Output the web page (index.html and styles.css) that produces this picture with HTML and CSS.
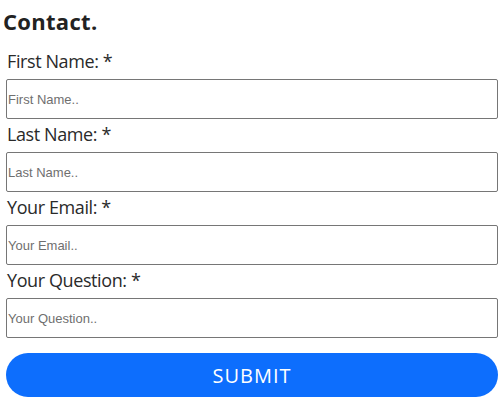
FILE: index.html
```html
<!DOCTYPE html>
<html lang="en">
<head>
<meta charset="utf-8">
<title>Contact</title>
<link rel="stylesheet" href="styles.css">
</head>
<body>
<main class="contact">
  <h1 class="contact-title">Contact.</h1>
  <form class="contact-form">
    <div class="field">
      <label class="field-label" for="fn">First Name: *</label>
      <input class="field-input" id="fn" type="text" placeholder="First Name..">
    </div>
    <div class="field">
      <label class="field-label" for="ln">Last Name: *</label>
      <input class="field-input" id="ln" type="text" placeholder="Last Name..">
    </div>
    <div class="field">
      <label class="field-label" for="em">Your Email: *</label>
      <input class="field-input" id="em" type="text" placeholder="Your Email..">
    </div>
    <div class="field">
      <label class="field-label" for="qu">Your Question: *</label>
      <input class="field-input" id="qu" type="text" placeholder="Your Question..">
    </div>
    <button class="submit" type="button">SUBMIT</button>
  </form>
</main>
</body>
</html>
```

FILE: styles.css
```css
html, body {
  margin: 0;
  padding: 0;
  background: #ffffff;
}

.contact {
  padding: 7px 6px 0 6px;
  font-family: "Open Sans", "Liberation Sans", sans-serif;
  color: #222222;
}

.contact-title {
  margin: 0 0 11px -3px;
  font-size: 22px;
  line-height: 28px;
  font-weight: 700;
  letter-spacing: 0.3px;
  color: #222222;
}

.contact-form {
  display: flex;
  flex-direction: column;
}

.field {
  display: flex;
  flex-direction: column;
}

.field-label {
  margin: 2px 0 5px 1px;
  font-size: 18px;
  line-height: 26px;
  font-weight: 400;
  letter-spacing: -0.4px;
  color: #2a2a2a;
}

.field-input {
  box-sizing: border-box;
  width: 492px;
  height: 40px;
  margin: 0;
  padding: 0 0 0 1px;
  border: 1px solid #767676;
  border-radius: 2px;
  font-family: "Liberation Sans", Arial, sans-serif;
  font-size: 13px;
  color: #222222;
  background: #ffffff;
}

.field-input::placeholder {
  color: #6f6f6f;
}

.submit {
  box-sizing: border-box;
  width: 492px;
  height: 44px;
  margin-top: 15px;
  border: none;
  border-radius: 22px;
  background: #0d6efd;
  color: #ffffff;
  font-family: "Open Sans", "Liberation Sans", sans-serif;
  font-size: 20px;
  letter-spacing: 1px;
  cursor: pointer;
}
```
